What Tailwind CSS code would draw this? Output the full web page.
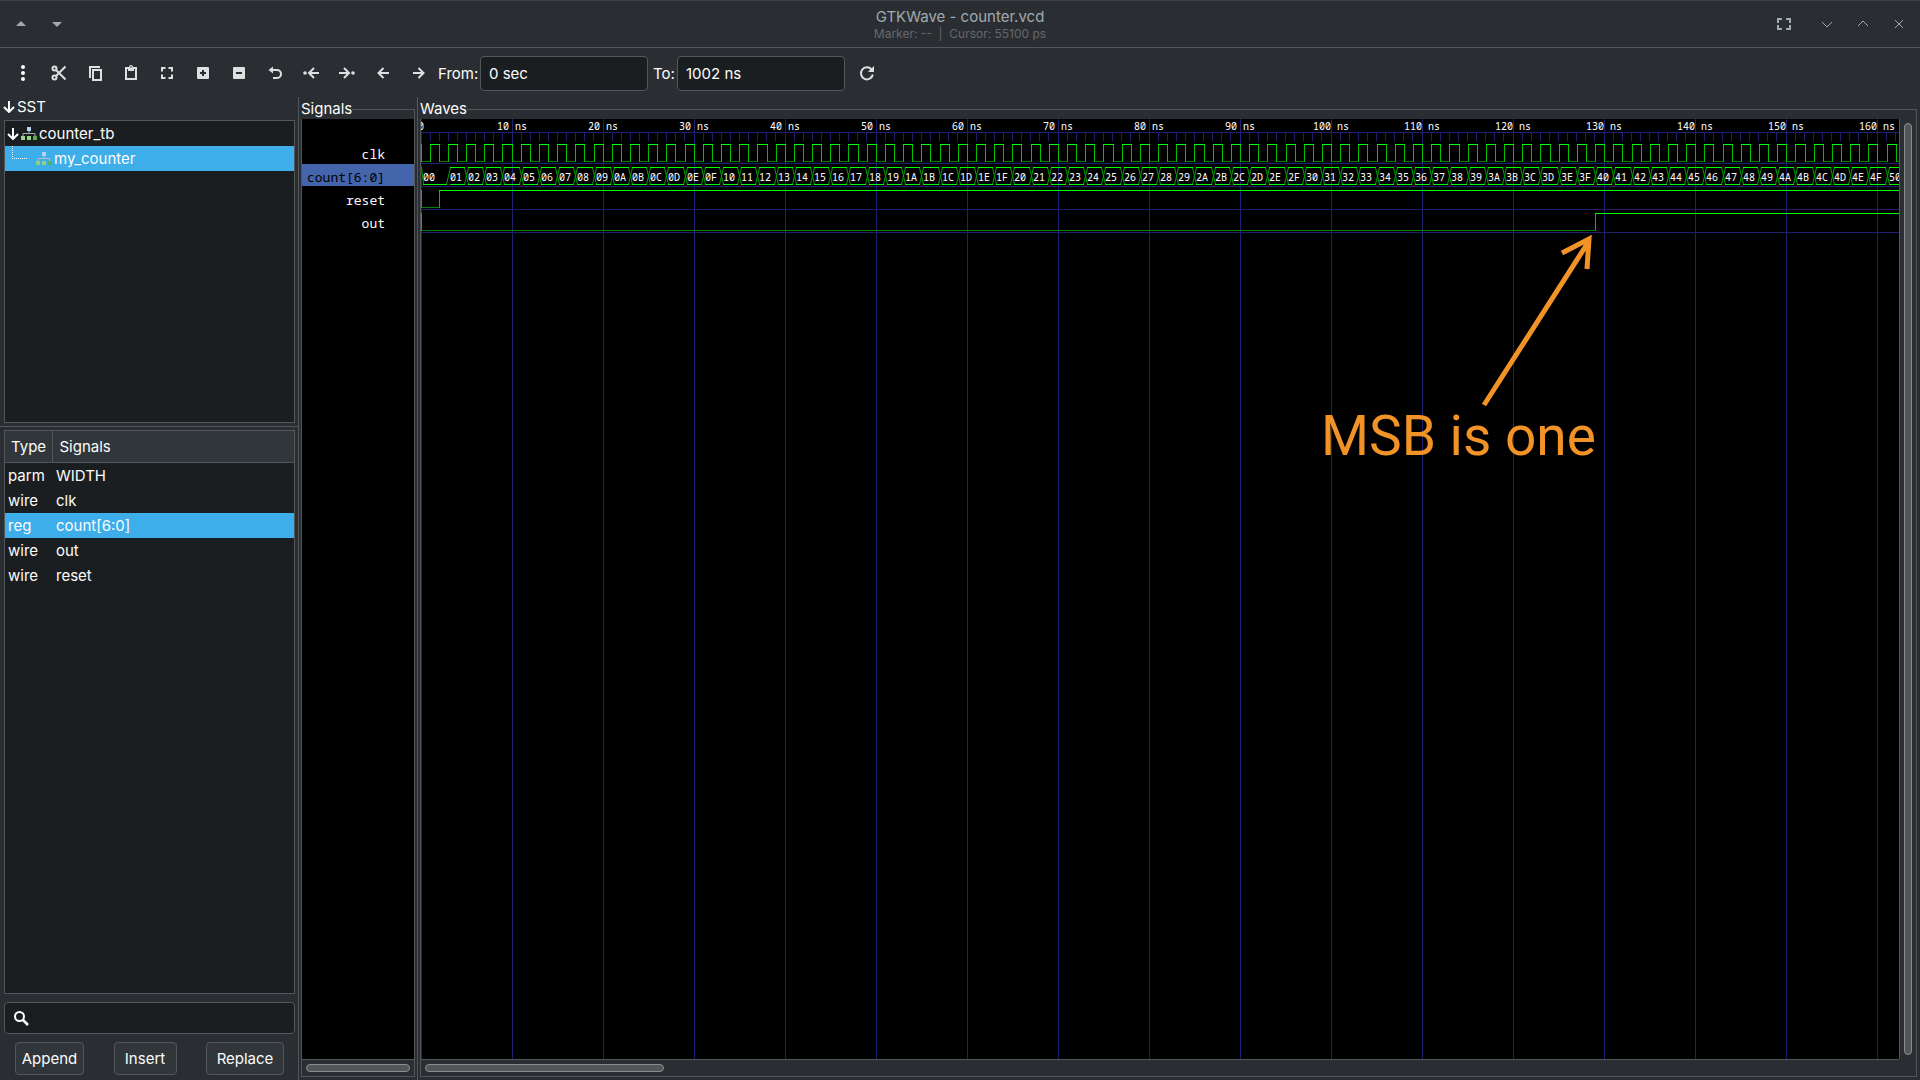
<!DOCTYPE html>
<html lang="en">
<head>
    <meta charset="UTF-8">
    <meta name="viewport" content="width=device-width, initial-scale=1.0">
    <title>GTKWave - counter.vcd</title>
    <script src="https://cdn.jsdelivr.net/npm/@tailwindcss/browser@4"></script>
</head>
<body class="flex flex-col h-screen overflow-hidden bg-[#2a2e32] text-[#fcfcfc] text-[15px] leading-[25px] font-['Inter',sans-serif]">
    <!-- title bar -->
    <header class="grid grid-cols-3 items-center h-12 shrink-0 px-3 border-t border-t-[#384146] border-b border-b-[#54575a] text-[#a1a9b1]">
        <div class="flex gap-3">
            <button aria-label="Keep above" class="size-6 ml-[-3px]"><svg class="size-full" viewBox="0 0 24 24" fill="#a1a9b1"><path d="M7 14h10l-5-5z"/></svg></button>
            <button aria-label="Keep below" class="size-6"><svg class="size-full" viewBox="0 0 24 24" fill="#a1a9b1"><path d="M7 10h10l-5 5z"/></svg></button>
        </div>
        <div class="text-center pt-[2px]">
            <h1 class="leading-[18px]">GTKWave - counter.vcd</h1>
            <p class="text-[12px] leading-4 text-[#65696d]">Marker: --&nbsp; |&nbsp; Cursor: 55100 ps</p>
        </div>
        <div class="flex justify-end items-center gap-3 mr-[-3px]">
            <button aria-label="Fullscreen" class="size-6 mr-[7px]"><svg class="size-full" viewBox="0 0 24 24" fill="none" stroke="#a1a9b1" stroke-width="2"><path d="M6 11V7h4M14 7h4v4M18 13v4h-4M10 17H6v-4"/></svg></button>
            <button aria-label="Minimize" class="size-6"><svg class="size-full" viewBox="0 0 24 24" fill="none" stroke="#a1a9b1"><path d="M7 10l5 5 5-5"/></svg></button>
            <button aria-label="Maximize" class="size-6"><svg class="size-full" viewBox="0 0 24 24" fill="none" stroke="#a1a9b1"><path d="M7 14l5-5 5 5"/></svg></button>
            <button aria-label="Close" class="size-6"><svg class="size-full" viewBox="0 0 24 24" fill="none" stroke="#a1a9b1"><path d="M8 8l8 8M16 8l-8 8"/></svg></button>
        </div>
    </header>

    <!-- toolbar -->
    <div class="flex items-center h-[49px] shrink-0 pt-[2px] pl-[11px]">
        <div class="flex gap-3 mr-[7px] mb-px">
            <button aria-label="Menu" class="size-6"><svg class="size-full" viewBox="0 0 24 24" fill="#fcfcfc"><circle cx="12" cy="6" r="2"/><circle cx="12" cy="12" r="2"/><circle cx="12" cy="18" r="2"/></svg></button>
            <button aria-label="Cut" class="size-6"><svg class="size-full" viewBox="0 0 24 24" fill="none" stroke="#dfdfdf" stroke-width="2"><circle cx="7.500" cy="7.500" r="2"/><circle cx="7.500" cy="16.500" r="2"/><path d="M9 9l9.500 9.500M9 15l9.500-9.500"/></svg></button>
            <button aria-label="Copy" class="size-6"><svg class="size-full" viewBox="0 0 24 24" fill="none" stroke="#dfdfdf" stroke-width="2"><path d="M7 17V6h10"/><path d="M10 9h8v10h-8z"/></svg></button>
            <button aria-label="Paste" class="size-6"><svg class="size-full" viewBox="0 0 24 24"><path d="M7 7h10v11H7z" fill="none" stroke="#dfdfdf" stroke-width="2"/><path d="M9 6h1a2 2 0 0 1 4 0h1v4H9z" fill="#dfdfdf"/><circle cx="12" cy="6" r=".8" fill="#2a2e32"/></svg></button>
            <button aria-label="Zoom fit" class="size-6"><svg class="size-full" viewBox="0 0 24 24" fill="none" stroke="#dfdfdf" stroke-width="2"><path d="M7 10.500V7h3.500M13.500 7H17v3.500M17 13.500V17h-3.500M10.500 17H7v-3.500"/></svg></button>
            <button aria-label="Zoom in" class="size-6"><svg class="size-full" viewBox="0 0 24 24"><rect x="6" y="6" width="12" height="12" rx="1" fill="#dfdfdf"/><path d="M9 12h6M12 9v6" stroke="#2a2e32" stroke-width="2"/></svg></button>
            <button aria-label="Zoom out" class="size-6"><svg class="size-full" viewBox="0 0 24 24"><rect x="6" y="6" width="12" height="12" rx="1" fill="#dfdfdf"/><path d="M9 12h6" stroke="#2a2e32" stroke-width="2"/></svg></button>
            <button aria-label="Zoom undo" class="size-6"><svg class="size-full" viewBox="0 0 24 24"><path d="M9 9h5a4 4 0 0 1 0 8h-4" fill="none" stroke="#dfdfdf" stroke-width="2"/><path d="M5.500 9L10 5.500v7z" fill="#dfdfdf"/></svg></button>
            <button aria-label="Zoom to start" class="size-6"><svg class="size-full" viewBox="0 0 24 24"><path d="M20 12H10M15 7l-5 5 5 5" fill="none" stroke="#dfdfdf" stroke-width="2"/><circle cx="6" cy="12" r="1.800" fill="#dfdfdf"/></svg></button>
            <button aria-label="Zoom to end" class="size-6"><svg class="size-full" viewBox="0 0 24 24"><path d="M4 12h10M9 7l5 5-5 5" fill="none" stroke="#dfdfdf" stroke-width="2"/><circle cx="18" cy="12" r="1.800" fill="#dfdfdf"/></svg></button>
            <button aria-label="Previous edge" class="size-6"><svg class="size-full" viewBox="0 0 24 24"><path d="M18 12H8M12.500 7l-5 5 5 5" fill="none" stroke="#dfdfdf" stroke-width="2"/></svg></button>
            <button aria-label="Next edge" class="size-6"><svg class="size-full" viewBox="0 0 24 24"><path d="M6 12h10M11.500 7l5 5-5 5" fill="none" stroke="#dfdfdf" stroke-width="2"/></svg></button>
        </div>
        <label for="from" class="w-[42px]">From:</label>
        <input id="from" type="text" value="0 sec" class="w-[168px] h-[35px] px-2 rounded-[4px] border border-[#54575a] bg-[#1b1e20]">
        <label for="to" class="w-6 ml-[5px]">To:</label>
        <input id="to" type="text" value="1002 ns" class="w-[168px] h-[35px] px-2 rounded-[4px] border border-[#54575a] bg-[#1b1e20]">
        <button aria-label="Reload" class="size-6 ml-[10px] mb-px"><svg class="size-full" viewBox="0 0 24 24"><path d="M16.500 8.500a6 6 0 1 0 1.300 5" fill="none" stroke="#dfdfdf" stroke-width="2"/><path d="M19 5v6h-6z" fill="#dfdfdf"/></svg></button>
    </div>

    <main class="flex flex-1 min-h-0">
        <!-- design hierarchy and signal list -->
        <aside class="flex flex-col w-[299px] shrink-0 border-r border-[#54575a]">
            <div class="flex items-center h-5 mb-[3px] shrink-0 pl-[3px] gap-[2px] leading-[18px]">
                <svg class="w-3 h-3" viewBox="0 0 12 12" fill="none" stroke="#fcfcfc" stroke-width="2"><path d="M6 0v11M1 6l5 5 5-5"/></svg>
                <h2>SST</h2>
            </div>
            <ul class="h-[303px] shrink-0 ml-1 mr-[3px] border border-[#54575a] bg-[#1b1e20]">
                <li class="flex items-center h-[25px] pl-[2px] gap-[2px]">
                    <svg class="w-3 h-3" viewBox="0 0 12 12" fill="none" stroke="#fcfcfc" stroke-width="2"><path d="M6 0v11M1 6l5 5 5-5"/></svg>
                    <svg class="w-4 h-4" viewBox="0 0 16 16"><path d="M8 5v3M2 10V7.500h12V10" fill="none" stroke="#aaa"/><path d="M6 1h4v4H6z" fill="#b5d3f5"/><path d="M0 10h4v4H0zM6 10h4v4H6z" fill="#9ad489"/><path d="M12 10h4v4h-4z" fill="#5cb04c"/></svg>
                    <span>counter_tb</span>
                </li>
                <li class="flex items-center h-[25px] pl-[7px] bg-[#3daee9]">
                    <span class="w-[15px] h-[13px] mr-[9px] mb-3 border-l border-b border-dotted border-[#fcfcfc]"></span>
                    <svg class="w-4 h-4 mr-[2px]" viewBox="0 0 16 16"><path d="M8 5v3M2 10V7.500h12V10" fill="none" stroke="#b4bcc4"/><path d="M6 1h4v4H6z" fill="#b5d3f5"/><path d="M0 10h4v4H0zM6 10h4v4H6z" fill="#8fd08a"/><path d="M12 10h4v4h-4z" fill="#4fb06a"/></svg>
                    <span>my_counter</span>
                </li>
            </ul>
            <div class="h-[7px] shrink-0 mt-[3px] border-t border-[#54575a]"></div>
            <div class="flex-1 min-h-0 mt-[-3px] ml-1 mr-[3px] border border-[#54575a] bg-[#1b1e20]">
                <table class="w-full text-left">
                    <thead>
                        <tr class="h-[31px] bg-[#31363b] border-b border-[#54575a]">
                            <th class="w-[47px] pl-[6px] font-normal border-r border-[#54575a]">Type</th>
                            <th class="pl-[7px] font-normal">Signals</th>
                        </tr>
                    </thead>
                    <tbody>
                        <tr><td class="pl-[3px]">parm</td><td class="pl-1">WIDTH</td></tr>
                        <tr><td class="pl-[3px]">wire</td><td class="pl-1">clk</td></tr>
                        <tr class="bg-[#3daee9]"><td class="pl-[3px]">reg</td><td class="pl-1">count[6:0]</td></tr>
                        <tr><td class="pl-[3px]">wire</td><td class="pl-1">out</td></tr>
                        <tr><td class="pl-[3px]">wire</td><td class="pl-1">reset</td></tr>
                    </tbody>
                </table>
            </div>
            <label class="flex items-center h-8 shrink-0 mt-2 ml-1 mr-[3px] pl-2 rounded-[4px] border border-[#54575a] bg-[#1b1e20]">
                <svg class="w-4 h-4" viewBox="0 0 16 16" fill="none" stroke="#fcfcfc" stroke-width="2"><circle cx="6.500" cy="6.500" r="4.500"/><path d="M10 10l5 5" stroke-width="2.500"/></svg>
                <input type="search" aria-label="Filter signals" class="flex-1 min-w-0 px-2 outline-none">
            </label>
            <div class="flex justify-between mt-2 mb-[5px] ml-[15px] mr-[14px]">
                <button class="h-[33px] w-[69px] rounded-[4px] border border-[#54575a] bg-[#31363b]">Append</button>
                <button class="h-[33px] w-[63px] rounded-[4px] border border-[#54575a] bg-[#31363b]">Insert</button>
                <button class="h-[33px] w-[78px] rounded-[4px] border border-[#54575a] bg-[#31363b]">Replace</button>
            </div>
        </aside>

        <!-- signal names -->
        <section class="flex flex-col w-[119px] shrink-0 pl-[2px] pr-[2px] pb-[3px] border-r border-[#54575a]">
            <div class="flex items-center h-[22px] shrink-0">
                <h2>Signals</h2><span class="flex-1 h-[10px] mt-3 border-t border-r border-[#54575a]"></span>
            </div>
            <div class="flex flex-col flex-1 min-h-0 border border-t-0 border-[#54575a]">
                <ul class="flex-1 pt-[22px] bg-black text-right text-[13px] leading-[27px] font-['Noto_Sans_Mono','DejaVu_Sans_Mono',monospace]">
                    <li class="h-[23px] pr-[29px]">clk</li>
                    <li class="h-[22px] pr-[29px] mb-px bg-[#4464ac] text-black">count[6:0]</li>
                    <li class="h-[23px] pr-[29px]">reset</li>
                    <li class="h-[23px] pr-[29px]">out</li>
                </ul>
                <div class="h-[17px] px-1 pt-1 border-t border-[#54575a]">
                    <div class="h-2 rounded-full border border-[#8a8d8f] bg-[#54575a]"></div>
                </div>
            </div>
        </section>

        <!-- waveforms -->
        <section class="flex flex-col flex-1 min-w-0 pl-[2px] pr-[3px] pb-[3px]">
            <div class="flex items-center h-[22px] shrink-0">
                <h2>Waves</h2><span class="flex-1 h-[10px] mt-3 border-t border-r border-[#54575a]"></span>
            </div>
            <div class="flex flex-col flex-1 min-h-0 border border-t-0 border-[#54575a]">
                <div class="flex flex-1 min-h-0">
                    <div class="relative flex-1 min-w-0 bg-black border-r border-[#54575a] overflow-hidden">
                        <svg id="waves" class="absolute inset-0 w-full h-full text-[10px] font-['Noto_Sans_Mono','DejaVu_Sans_Mono',monospace]" shape-rendering="crispEdges"></svg>
                        <svg class="absolute left-[1059px] top-[110px] w-[112px] h-[180px]" viewBox="0 0 112 180" fill="none" stroke="#f29327" stroke-width="5"><path d="M4 176L109 12M82 24L109 10L107 40"/></svg>
                        <p class="absolute left-[900px] top-[281px] text-[55px] leading-[72px] text-[#f29327] whitespace-nowrap font-['Roboto',sans-serif]">MSB is one</p>
                    </div>
                    <div class="w-4 pl-1 pt-1 pb-1">
                        <div class="w-2 h-full rounded-full border border-[#8a8d8f] bg-[#54575a]"></div>
                    </div>
                </div>
                <div class="h-[17px] px-1 pt-1 border-t border-[#54575a] mr-[17px]">
                    <div class="w-[239px] h-2 rounded-full border border-[#8a8d8f] bg-[#54575a]"></div>
                </div>
            </div>
        </section>
    </main>

    <script>
        const svg = document.getElementById('waves');
        const MAJOR = 91;       // px per 10 ns on the ruler
        const SCALE = 9.1056;   // px per ns on the traces
        const END = 163;        // last ns drawn
        const FAR = 4000;

        const at = ns => Math.floor(ns * SCALE);
        const path = (d, color, crisp = true) =>
            `<path d="${d}" fill="none" stroke="${color}"${crisp ? '' : ' shape-rendering="auto"'}/>`;
        const hline = (x1, x2, y) => `M${x1} ${y + 0.5}H${x2}`;
        const vline = (x, y1, y2) => `M${x + 0.5} ${y1}V${y2}`;
        const label = (x, y, text, anchor) =>
            `<text x="${x}" y="${y}" fill="#fff" text-anchor="${anchor}">${text}</text>`;

        let grid = hline(0, FAR, 13);
        let labels = label(0, 11, '0', 'middle');
        for (let i = 0; i * 10 < END; i++) {
            grid += vline(i * MAJOR, 0, FAR);
            for (let j = 1; j < 10; j++) grid += vline(i * MAJOR + j * 9, 13, 22);
            if (i > 0) labels += label(i * MAJOR, 11, `${i * 10} ns`, 'middle');
        }
        for (let r = 0; r < 4; r++) grid += hline(0, FAR, 44 + r * 23);

        let high = '', low = '', edge = '', bus = '', cross = '';

        // clk
        edge += vline(0, 25, 43);
        for (let n = 0; n < END; n += 2) {
            low += hline(at(n), at(n + 1), 42);
            high += hline(at(n + 1), at(n + 2) + 1, 25);
            edge += vline(at(n + 1), 25, 43) + vline(at(n + 2), 25, 43);
        }

        // count[6:0]
        bus += hline(2, at(3) - 1, 65);
        cross += `M0.5 48L2.5 65M${at(3) - 1.5} 65.5L${at(3) + 2.5} 48.5`;
        labels += label(2, 62, '00', 'start');
        for (let v = 1; v * 2 + 1 < END; v++) {
            const a = at(v * 2 + 1), b = at(v * 2 + 3);
            bus += hline(a + 2, b - 1, 48) + hline(a + 2, b - 1, 65);
            cross += `M${b - 1.5} 48.5L${b + 2.5} 65.5M${b - 1.5} 65.5L${b + 2.5} 48.5`;
            labels += label(a + 2, 62, v.toString(16).toUpperCase().padStart(2, '0'), 'start');
        }

        // reset
        low += hline(0, at(2), 88);
        edge += vline(0, 71, 89) + vline(at(2), 71, 89);
        high += hline(at(2), FAR, 71);

        // out
        low += hline(0, at(129) + 1, 111);
        edge += vline(0, 94, 112) + vline(at(129), 94, 112);
        high += hline(at(129), FAR, 94);

        svg.innerHTML = path(grid, '#202070') + path(low, '#008000') + path(edge, '#00c000') +
            path(cross, '#00a000', false) + path(high + bus, '#00ff00') + labels;
    </script>
</body>
</html>
